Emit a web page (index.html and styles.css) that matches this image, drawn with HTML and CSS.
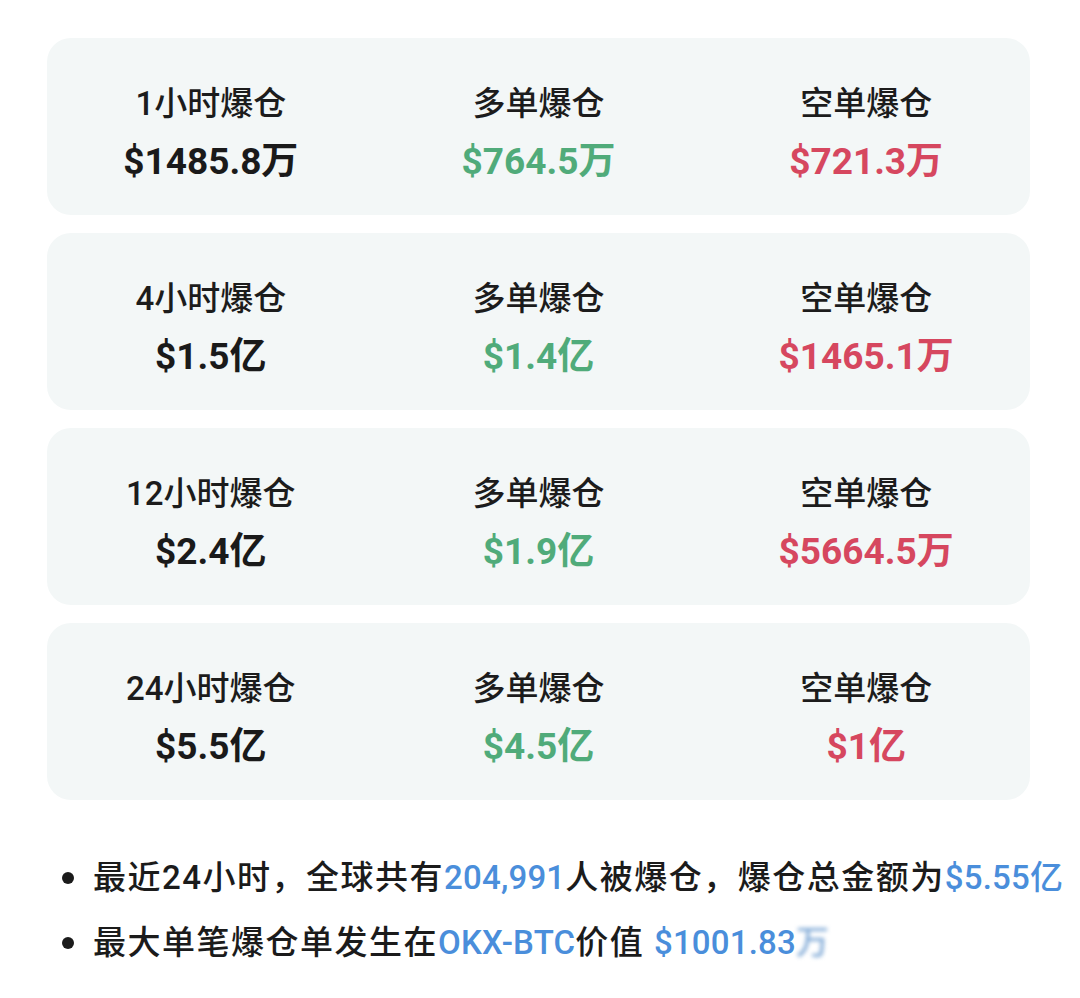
FILE: index.html
```html
<!DOCTYPE html>
<html lang="zh-CN">
<head>
<meta charset="utf-8">
<title>爆仓数据</title>
<link rel="stylesheet" href="styles.css">
</head>
<body>
<main class="page">
  <section class="cards">
    <div class="card">
      <div class="cell"><div class="label">1小时爆仓</div><div class="value">$1485.8万</div></div>
      <div class="cell"><div class="label">多单爆仓</div><div class="value green">$764.5万</div></div>
      <div class="cell"><div class="label">空单爆仓</div><div class="value red">$721.3万</div></div>
    </div>
    <div class="card">
      <div class="cell"><div class="label">4小时爆仓</div><div class="value">$1.5亿</div></div>
      <div class="cell"><div class="label">多单爆仓</div><div class="value green">$1.4亿</div></div>
      <div class="cell"><div class="label">空单爆仓</div><div class="value red">$1465.1万</div></div>
    </div>
    <div class="card">
      <div class="cell"><div class="label">12小时爆仓</div><div class="value">$2.4亿</div></div>
      <div class="cell"><div class="label">多单爆仓</div><div class="value green">$1.9亿</div></div>
      <div class="cell"><div class="label">空单爆仓</div><div class="value red">$5664.5万</div></div>
    </div>
    <div class="card">
      <div class="cell"><div class="label">24小时爆仓</div><div class="value">$5.5亿</div></div>
      <div class="cell"><div class="label">多单爆仓</div><div class="value green">$4.5亿</div></div>
      <div class="cell"><div class="label">空单爆仓</div><div class="value red">$1亿</div></div>
    </div>
  </section>
  <ul class="notes">
    <li>最近24小时，全球共有<span class="blue">204,991</span>人被爆仓，爆仓总金额为<span class="blue">$5.55亿</span></li>
    <li>最大单笔爆仓单发生在<span class="blue">OKX-BTC</span>价值 <span class="blue">$1001.83</span><span class="blur">万</span></li>
  </ul>
</main>
</body>
</html>
```

FILE: styles.css
```css
* { box-sizing: border-box; }
html, body {
  margin: 0;
  padding: 0;
  background: #ffffff;
}
body {
  font-family: Roboto, "Noto Sans CJK SC", sans-serif;
  color: #1b1b1b;
}
.page {
  width: 1080px;
  padding: 38px 0 0 47px;
}
.cards {
  width: 983px;
  display: flex;
  flex-direction: column;
  gap: 18px;
}
.card {
  height: 177px;
  background: #f3f7f7;
  border-radius: 24px;
  display: grid;
  grid-template-columns: 1fr 1fr 1fr;
  padding-top: 44px;
}
.cell {
  display: flex;
  flex-direction: column;
  align-items: center;
  gap: 11px;
}
.label {
  font-size: 33px;
  line-height: 44px;
  font-weight: 500;
  color: #1c1c1c;
}
.value {
  font-size: 37px;
  line-height: 50px;
  font-weight: 700;
  color: #1a1a1a;
}
.green { color: #50ab7a; }
.red { color: #d6475f; }
.notes {
  list-style: none;
  margin: 45px 0 0 0;
  padding: 0 0 0 15px;
}
.notes li {
  position: relative;
  padding-left: 31px;
  font-size: 33px;
  letter-spacing: 1.5px;
  line-height: 65px;
  font-weight: 500;
  color: #1b1b1b;
  white-space: nowrap;
}
.notes li::before {
  content: "";
  position: absolute;
  left: 0;
  top: 27px;
  width: 12px;
  height: 12px;
  border-radius: 50%;
  background: #1b1b1b;
}
.blue { color: #4a8edb; font-weight: 500; letter-spacing: 0.2px; }
.blur {
  color: #7fa9d6;
  filter: blur(2px);
}
```
